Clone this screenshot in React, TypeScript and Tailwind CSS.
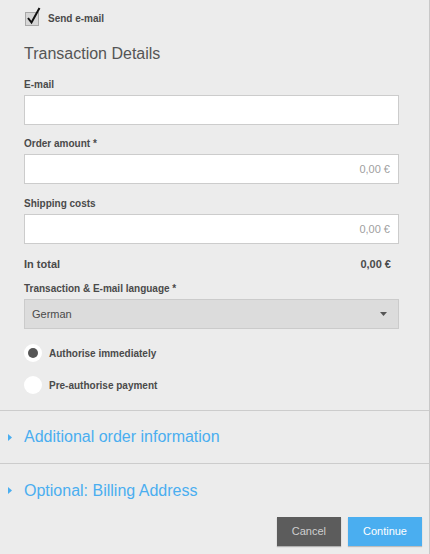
import React from 'react';

const font = { fontFamily: '"Liberation Sans", Arial, sans-serif' };

const Label = ({ children, className = '' }: { children: React.ReactNode; className?: string }) => (
  <div className={`text-[10px] leading-[12px] font-bold text-[#4a4a4a] ${className}`}>{children}</div>
);

const Field = ({ label, value, className = '' }: { label: string; value?: string; className?: string }) => (
  <div className={className}>
    <Label>{label}</Label>
    <div className="mt-[4px] h-[30px] bg-white border border-[#cccccc] flex items-center justify-end pr-[8px] text-[11px] text-[#a0a0a0]">
      {value}
    </div>
  </div>
);

const Radio = ({ label, checked }: { label: string; checked?: boolean }) => (
  <div className="flex items-center gap-[7px]">
    <div className="w-[18px] h-[18px] rounded-full bg-white flex items-center justify-center">
      {checked && <div className="w-[10px] h-[10px] rounded-full bg-[#555555]" />}
    </div>
    <span className="text-[10px] font-bold text-[#4a4a4a]">{label}</span>
  </div>
);

const Section = ({ title, border }: { title: string; border?: boolean }) => (
  <div className={`h-[53px] flex items-center pl-[8px] ${border ? 'border-b border-[#cccccc]' : ''}`}>
    <svg width="4" height="7" viewBox="0 0 4 7" className="mr-[12px]">
      <path d="M0 0 L4 3.5 L0 7 Z" fill="#4aaef0" />
    </svg>
    <span className="text-[16px] leading-[20px] text-[#4aaef0]">{title}</span>
  </div>
);

export default function App() {
  return (
    <div style={font} className="w-[430px] h-[554px] bg-[#ececec] border-r border-[#c8c8c8] overflow-hidden">
      <div className="pl-[24px] pr-[30px]">
        <div className="pt-[11px] flex items-center">
          <div className="relative ml-[1px] w-[14px] h-[14px] bg-[#d6d6d6] border border-[#a8a8a8]">
            <svg width="16" height="18" viewBox="0 0 16 18" className="absolute left-[0px] top-[-6px]">
              <path d="M2 11 L5.5 15.5 L13.5 1" stroke="#111111" strokeWidth="2" fill="none" strokeLinejoin="miter" />
            </svg>
          </div>
          <span className="ml-[9px] text-[10px] font-bold text-[#4a4a4a]">Send e-mail</span>
        </div>

        <h2 className="mt-[18px] text-[16px] leading-[20px] text-[#555555]">Transaction Details</h2>

        <Field className="mt-[15px]" label="E-mail" />
        <Field className="mt-[13px]" label="Order amount *" value="0,00 €" />
        <Field className="mt-[14px]" label="Shipping costs" value="0,00 €" />

        <div className="mt-[14px] flex justify-between text-[11px] leading-[12px] font-bold text-[#4a4a4a]">
          <span>In total</span>
          <span className="pr-[8px]">0,00 €</span>
        </div>

        <Label className="mt-[13px]">Transaction &amp; E-mail language *</Label>
        <div className="mt-[4px] h-[30px] bg-[#dcdcdc] border border-[#cbcbcb] flex items-center justify-between pl-[7px] pr-[11px]">
          <span className="text-[11px] text-[#4a4a4a]">German</span>
          <svg width="7" height="4" viewBox="0 0 7 4">
            <path d="M0 0 L7 0 L3.5 4 Z" fill="#555555" />
          </svg>
        </div>

        <div className="mt-[15px] flex flex-col gap-[14px]">
          <Radio label="Authorise immediately" checked />
          <Radio label="Pre-authorise payment" />
        </div>
      </div>

      <div className="mt-[16px] border-t border-[#cccccc]">
        <Section title="Additional order information" border />
        <Section title="Optional: Billing Address" />
      </div>

      <div className="flex justify-end gap-[7px] pr-[7px]">
        <button className="h-[29px] px-[15px] bg-[#5c5c5c] text-[11px] text-[#cfcfcf] shadow-[0_1px_1px_rgba(0,0,0,0.25)]">
          Cancel
        </button>
        <button className="h-[29px] px-[15px] bg-[#4aaef0] text-[11px] text-white shadow-[0_1px_1px_rgba(0,0,0,0.2)]">
          Continue
        </button>
      </div>
    </div>
  );
}
